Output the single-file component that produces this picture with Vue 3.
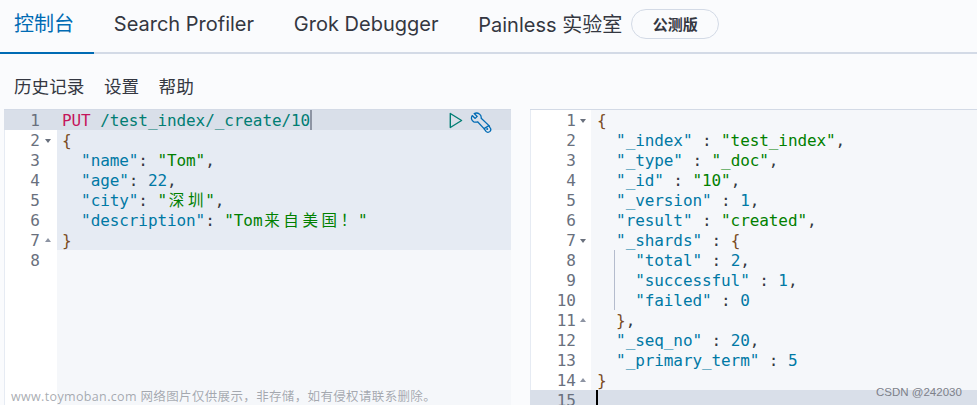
<script setup>
const P = 'p', K = 'k', S = 's', N = 'n', B = 'b', V = 'v', U = 'u', T = 't', C = 'cjk'
const leftRows = [
  { cls: 'active', parts: [[V, 'PUT'], [T, ' '], [U, '/test_index/_create/10']], caret: true },
  { cls: 'sel', fold: 'down', parts: [[B, '{']] },
  { cls: 'sel', parts: [[T, '  '], [K, '"name"'], [P, ': '], [S, '"Tom"'], [P, ',']] },
  { cls: 'sel', parts: [[T, '  '], [K, '"age"'], [P, ': '], [N, '22'], [P, ',']] },
  { cls: 'sel', parts: [[T, '  '], [K, '"city"'], [P, ': '], [S, '"'], [C, '深'], [C, '圳'], [S, '"'], [P, ',']] },
  { cls: 'sel', parts: [[T, '  '], [K, '"description"'], [P, ': '], [S, '"Tom'], [C, '来'], [C, '自'], [C, '美'], [C, '国'], [C, '！'], [S, '"']] },
  { cls: 'sel', fold: 'up', parts: [[B, '}']] },
  { cls: '', parts: [] }
]
const rightRows = [
  { fold: 'down', parts: [[B, '{']] },
  { parts: [[T, '  '], [K, '"_index"'], [P, ' : '], [S, '"test_index"'], [P, ',']] },
  { parts: [[T, '  '], [K, '"_type"'], [P, ' : '], [S, '"_doc"'], [P, ',']] },
  { parts: [[T, '  '], [K, '"_id"'], [P, ' : '], [S, '"10"'], [P, ',']] },
  { parts: [[T, '  '], [K, '"_version"'], [P, ' : '], [N, '1'], [P, ',']] },
  { parts: [[T, '  '], [K, '"result"'], [P, ' : '], [S, '"created"'], [P, ',']] },
  { fold: 'down', parts: [[T, '  '], [K, '"_shards"'], [P, ' : '], [B, '{']] },
  { guide: true, parts: [[T, '    '], [K, '"total"'], [P, ' : '], [N, '2'], [P, ',']] },
  { guide: true, parts: [[T, '    '], [K, '"successful"'], [P, ' : '], [N, '1'], [P, ',']] },
  { guide: true, parts: [[T, '    '], [K, '"failed"'], [P, ' : '], [N, '0']] },
  { fold: 'up', parts: [[T, '  '], [B, '}'], [P, ',']] },
  { parts: [[T, '  '], [K, '"_seq_no"'], [P, ' : '], [N, '20'], [P, ',']] },
  { parts: [[T, '  '], [K, '"_primary_term"'], [P, ' : '], [N, '5']] },
  { fold: 'up', parts: [[B, '}']] },
  { cls: 'active', cursor: true, parts: [] }
]
const tabs = ['Search Profiler', 'Grok Debugger']
</script>

<template>
  <div class="page">
    <nav class="tabs">
      <div class="tab current">控制台</div>
      <div v-for="t in tabs" :key="t" class="tab">{{ t }}</div>
      <div class="tab last">Painless 实验室<span class="badge">公测版</span></div>
    </nav>
    <div class="menu">
      <span>历史记录</span><span>设置</span><span>帮助</span>
    </div>
    <div class="panes">
      <section class="pane left">
        <div v-for="(r, i) in leftRows" :key="i" class="row" :class="r.cls">
          <div class="gutter"><span class="num">{{ i + 1 }}</span><i class="fold" :class="r.fold"></i></div>
          <div class="code"><span v-for="(p, j) in r.parts" :key="j" :class="p[0]">{{ p[1] }}</span><b v-if="r.caret" class="caret"></b></div>
        </div>
        <div class="actions">
          <svg width="14" height="17" viewBox="0 0 14 17" fill="none">
            <path d="M1.3 1.5 L12.6 8.5 L1.3 15.5 Z" stroke="#017d73" stroke-width="1.4" stroke-linejoin="round" />
          </svg>
          <svg width="22" height="22" viewBox="0 0 22 22" fill="none" stroke="#006bb4" stroke-width="1.3" stroke-linejoin="round">
            <path d="M4.2 1.6 L7.2 4.4 L5.2 6.4 L2.2 3.6 C0.8 6 1.4 8.6 3.8 9.8 C5.2 10.4 6.4 10.2 7.6 9.8 L14 16.6 L19 13.6 L11.2 6.2 C11.4 4.6 10.8 3 9.4 2 C7.8 0.8 5.8 0.8 4.2 1.6 Z" />
            <path d="M14 16.6 L16 19.4 C17 20.6 18.8 20.6 20 19.4 C21 18.2 20.8 16.4 19.8 15.4 L19 13.6" />
            <circle cx="17.2" cy="17" r="1" fill="#006bb4" stroke="none" />
          </svg>
        </div>
      </section>
      <section class="pane right">
        <div v-for="(r, i) in rightRows" :key="i" class="row" :class="r.cls">
          <div class="gutter"><span class="num">{{ i + 1 }}</span><i class="fold" :class="r.fold"></i></div>
          <div class="code"><i v-if="r.guide" class="guide"></i><b v-if="r.cursor" class="cursor"></b><span v-for="(p, j) in r.parts" :key="j" :class="p[0]">{{ p[1] }}</span></div>
        </div>
      </section>
    </div>
    <div class="mark site">www.toymoban.com 网络图片仅供展示，非存储，如有侵权请联系删除。</div>
    <div class="mark csdn">CSDN @242030</div>
  </div>
</template>

<style>
html, body { margin: 0; background: #fafbfd; }
</style>

<style scoped>
.page {
  position: relative;
  width: 977px;
  height: 405px;
  overflow: hidden;
  background: #fafbfd;
  font-family: Inter, "Noto Sans CJK SC", sans-serif;
  color: #343741;
}
.tabs {
  display: flex;
  height: 52px;
  border-bottom: 2px solid #d3dae6;
}
.tab {
  display: flex;
  align-items: center;
  height: 54px;
  padding: 0 20px 7px 19.8px;
  box-sizing: border-box;
  font-size: 20px;
  white-space: nowrap;
  margin-bottom: -2px;
}
.tab.current {
  padding-left: 14px;
  color: #006bb4;
  border-bottom: 2px solid #006bb4;
}
.badge {
  display: flex;
  align-items: center;
  justify-content: center;
  width: 88px;
  height: 30px;
  box-sizing: border-box;
  margin-left: 9px;
  border: 1px solid #d3dae6;
  border-radius: 15px;
  font-size: 15px;
  font-weight: 700;
}
.menu {
  display: flex;
  gap: 19.5px;
  height: 55px;
  padding: 21px 0 0 14px;
  box-sizing: border-box;
  font-size: 17.6px;
  line-height: 24px;
}
.panes {
  display: flex;
  align-items: stretch;
  height: 296px;
  padding-left: 4px;
}
.pane {
  position: relative;
  background: linear-gradient(to right, #fff var(--g), #f5f7fa var(--g));
  border-top: 1px solid #d3dae6;
  box-shadow: inset 1px 0 #e6ebf3;
  overflow: hidden;
  font-family: "DejaVu Sans Mono", monospace;
  font-size: 16px;
  line-height: 22px;
}
.left { width: 507px; --g: 53px; margin-right: 19px; }
.right { flex: 1; --g: 61px; }
.row {
  display: flex;
  height: 20px;
}
.gutter {
  position: relative;
  flex: none;
  box-sizing: border-box;
  color: #69707d;
  text-align: right;
}
.left .gutter { width: 53px; padding-right: 17px; }
.right .gutter { width: 61px; padding-right: 15px; }
.right .code { padding-left: 6px; }
.left .code { padding-left: 5px; }
.code {
  position: relative;
  flex: 1;
  white-space: pre;
  letter-spacing: -0.09px;
  color: #343741;
}
.code span {
  position: relative;
  z-index: 1;
}
.row.active { background: #d9dfe9; }
.row.sel .code { background: #e6ebf3; }
.fold {
  position: absolute;
  top: 9px;
  width: 0;
  height: 0;
  border-left: 3px solid transparent;
  border-right: 3px solid transparent;
}
.left .fold { left: 41px; }
.right .fold { left: 50px; }
.fold.down { border-top: 4px solid #69707d; }
.fold.up { border-bottom: 4px solid #8d94a3; top: 8px; }
.v { color: #c5155b; }
.u { color: #017d73; }
.k { color: #0079a5; }
.s { color: #018000; }
.n { color: #0079a5; }
.b { color: #7a4b24; }
.p { color: #343741; }
.cjk {
  display: inline-block;
  width: 19.1px;
  font-family: "Noto Sans CJK SC", sans-serif;
  font-size: 15.5px;
  line-height: 16px;
  text-align: center;
  color: #018000;
}
.caret {
  position: absolute;
  top: 0;
  width: 2px;
  height: 20px;
  background: #8d94a3;
}
.cursor {
  position: absolute;
  top: 0;
  left: 5px;
  width: 2px;
  height: 20px;
  background: #000;
}
.guide {
  position: absolute;
  left: 23px;
  top: 0;
  width: 1px;
  height: 20px;
  background: #b4bccd;
}
.actions {
  position: absolute;
  top: 2px;
  left: 445px;
  z-index: 2;
  display: flex;
  align-items: flex-start;
  gap: 7px;
}
.mark {
  position: absolute;
  white-space: nowrap;
  pointer-events: none;
}
.site {
  left: 11px;
  top: 388px;
  font-family: "Open Sans", "Noto Sans CJK SC", sans-serif;
  font-size: 12.5px;
  line-height: 17px;
  letter-spacing: 0.35px;
  color: rgba(110, 115, 125, 0.6);
}
.csdn {
  left: 876px;
  top: 384px;
  font-family: "Liberation Sans", sans-serif;
  font-size: 11.5px;
  line-height: 16px;
  color: #7d818a;
}
</style>
